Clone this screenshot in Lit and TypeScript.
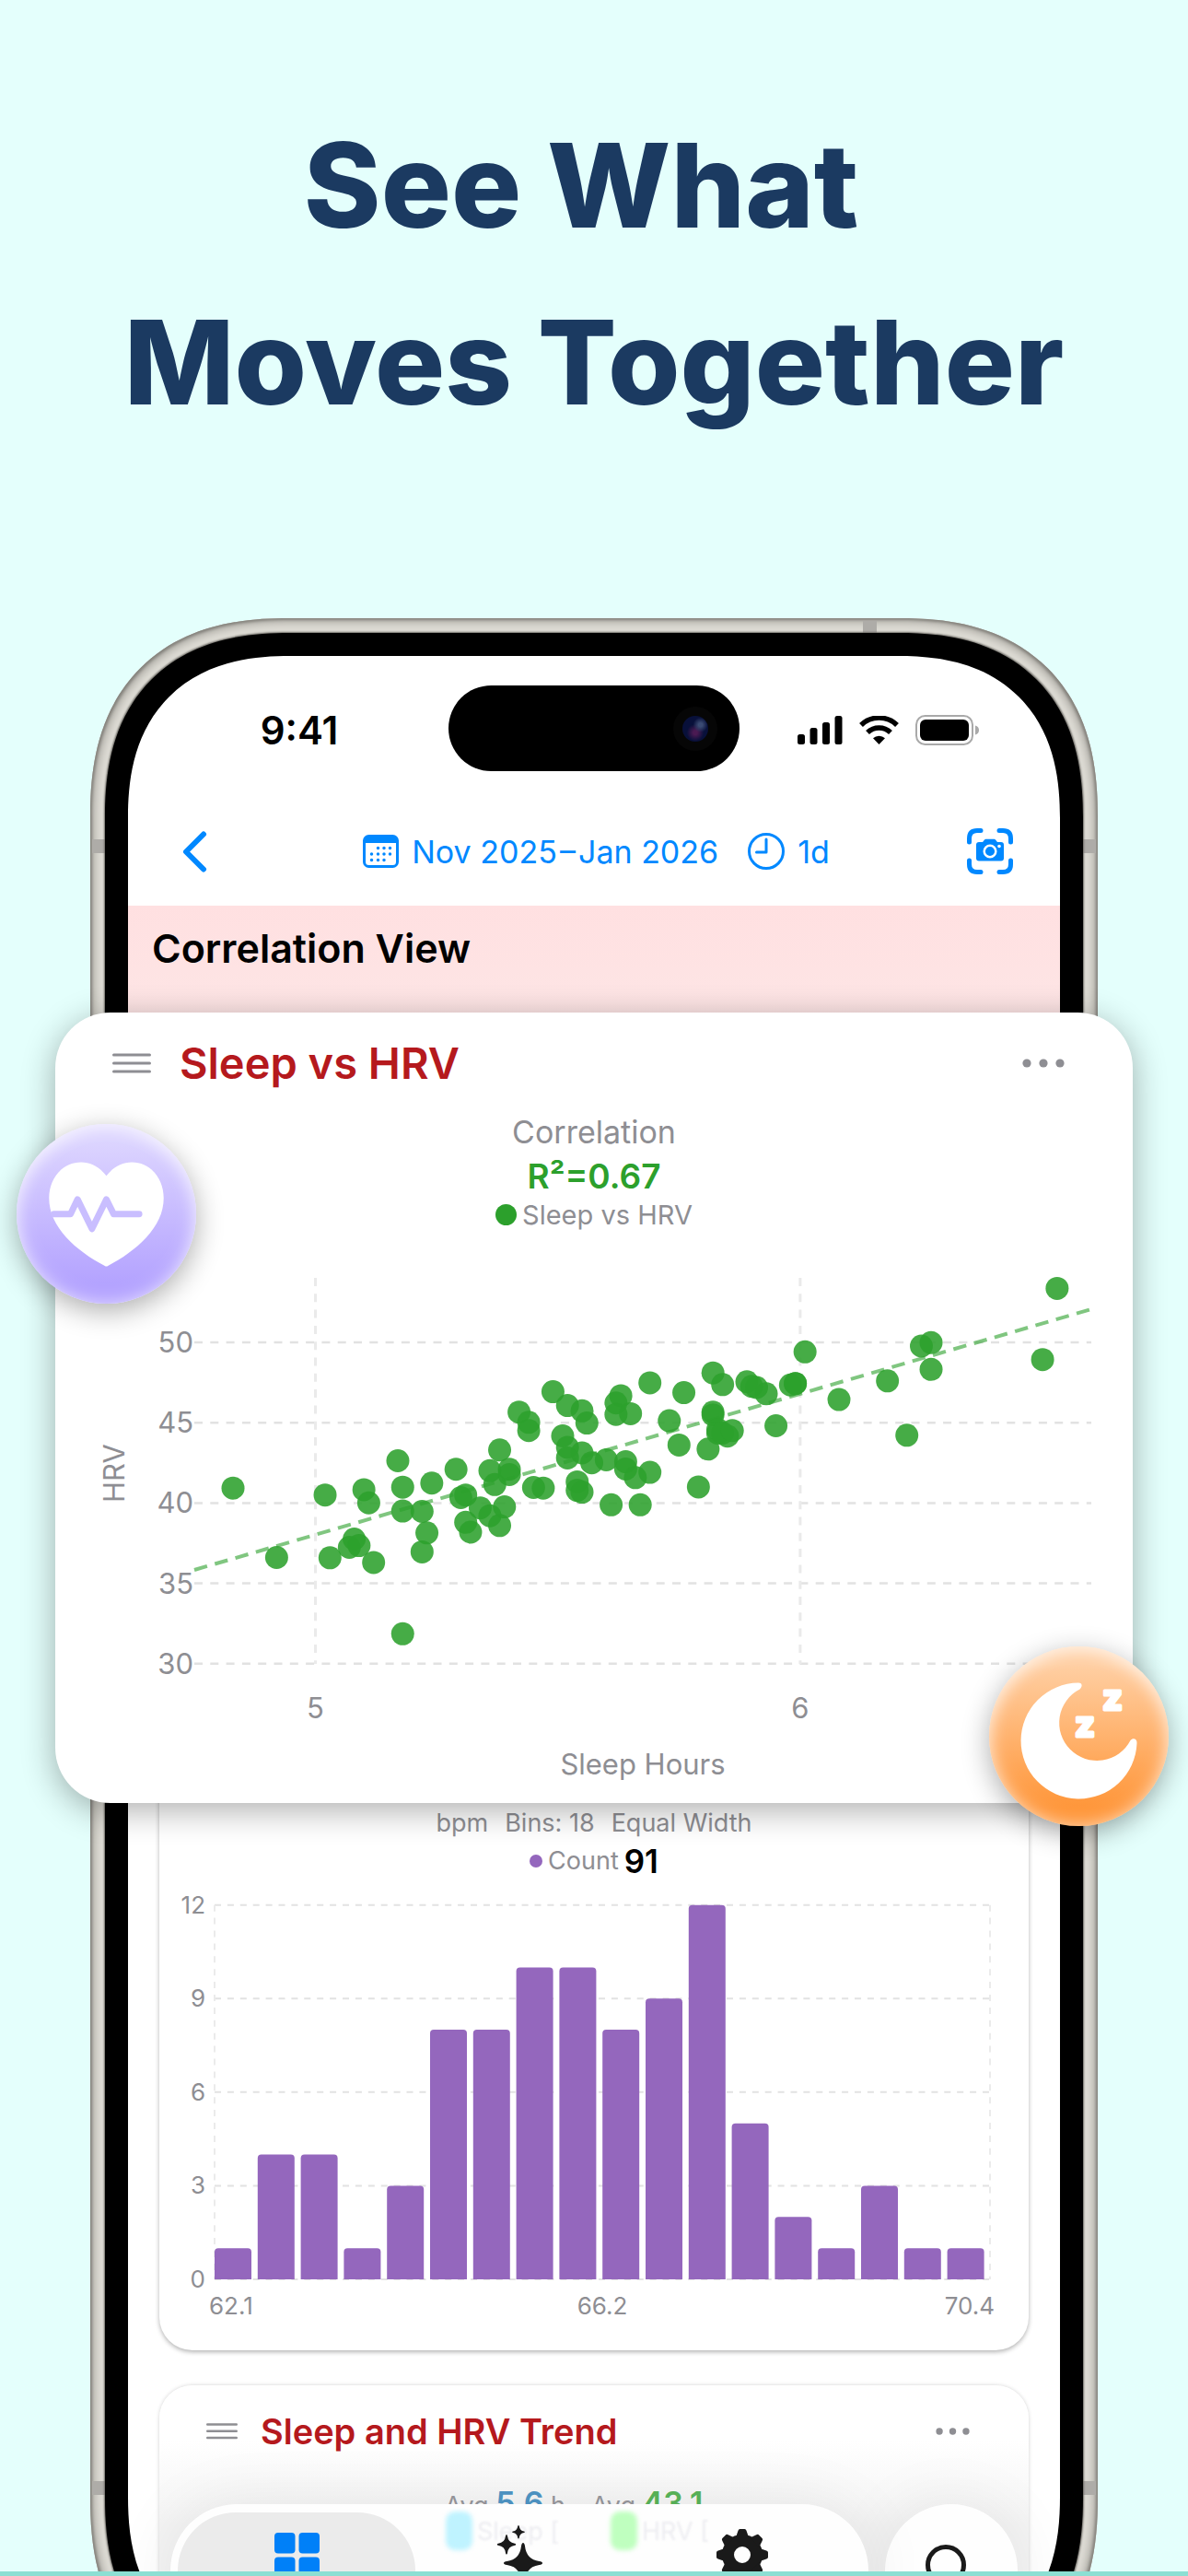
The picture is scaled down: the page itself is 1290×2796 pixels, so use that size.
import { LitElement, css, html, svg, type TemplateResult } from "lit";
import { customElement } from "lit/decorators.js";

// [sleep hours, HRV]
const points: [number, number][] = [
  [4.83, 40.93], [4.92, 36.61], [5.02, 40.5], [5.03, 36.59], [5.1, 40.83],
  [5.11, 40.01], [5.07, 37.24], [5.08, 37.76], [5.09, 37.35], [5.12, 36.3],
  [5.17, 42.63], [5.18, 40.99], [5.18, 39.5], [5.18, 31.86], [5.22, 39.48],
  [5.24, 41.24], [5.23, 38.14], [5.22, 36.96], [5.29, 42.1], [5.3, 40.34],
  [5.31, 40.5], [5.31, 38.8], [5.32, 38.19], [5.34, 39.7], [5.36, 42.01],
  [5.36, 39.21], [5.37, 41.15], [5.38, 43.3], [5.38, 38.6], [5.39, 39.76],
  [5.4, 42.1], [5.4, 41.77], [5.42, 45.66], [5.44, 45.02], [5.44, 44.51],
  [5.45, 40.97], [5.47, 40.93], [5.49, 46.93], [5.51, 44.18], [5.52, 46.07],
  [5.52, 43.47], [5.52, 42.81], [5.55, 45.74], [5.56, 44.98], [5.55, 43.12],
  [5.54, 41.32], [5.54, 40.79], [5.55, 40.68], [5.57, 42.51], [5.6, 42.69],
  [5.61, 39.89], [5.62, 46.23], [5.63, 46.68], [5.62, 45.52], [5.65, 45.56],
  [5.64, 42.57], [5.64, 42.12], [5.66, 41.58], [5.67, 39.89], [5.69, 47.48],
  [5.69, 41.91], [5.73, 45.12], [5.76, 46.87], [5.75, 43.61], [5.79, 41.0],
  [5.81, 43.36], [5.82, 48.1], [5.84, 47.37], [5.82, 45.65], [5.82, 45.49],
  [5.83, 44.56], [5.83, 44.35], [5.85, 44.17], [5.84, 44.35], [5.86, 44.51],
  [5.89, 47.55], [5.9, 47.26], [5.91, 47.19], [5.93, 46.8], [5.95, 44.81],
  [5.98, 47.35], [5.99, 47.44], [5.99, 47.44], [6.01, 49.41], [6.08, 46.44],
  [6.18, 47.6], [6.22, 44.22], [6.25, 49.77], [6.27, 49.98], [6.27, 48.32],
  [6.5, 48.93], [6.53, 53.36],
];

const bins = [1, 4, 4, 1, 3, 8, 8, 10, 10, 8, 9, 12, 5, 2, 1, 3, 1, 1];

const sx = (hours: number) => 282.5 + (hours - 5) * 526.4;
const sy = (hrv: number) => 80 + (50 - hrv) * 17.44;
const hx = (bin: number) => 60 + bin * 46.8;
const hy = (count: number) => 418 - count * 33.86;

@customElement("scatter-chart")
export class ScatterChart extends LitElement {
  render(): TemplateResult {
    return html`<svg viewBox="0 0 1170 580" role="img" aria-label="Sleep vs HRV">
      ${[50, 45, 40, 35, 30].map(
        (v) => svg`
          <line class="grid" x1="151" x2="1125" y1=${sy(v)} y2=${sy(v)} />
          <text x="150" y=${sy(v) + 11} text-anchor="end">${v}</text>`
      )}
      ${[5, 6].map(
        (v) => svg`
          <line class="grid light" x1=${sx(v)} x2=${sx(v)} y1="10" y2="429" />
          <text x=${sx(v)} y="488" text-anchor="middle">${v}</text>`
      )}
      <line class="trend" x1="151" y1="327" x2="1125" y2="44" />
      ${points.map(
        ([h, v]) => svg`<circle cx=${sx(h)} cy=${sy(v)} r="12.5" />`
      )}
      <text x="638" y="549" text-anchor="middle">Sleep Hours</text>
      <text transform="translate(75 222) rotate(-90)" text-anchor="middle">
        HRV
      </text>
    </svg>`;
  }

  static styles = css`
    :host {
      display: block;
    }

    svg {
      display: block;
      width: 100%;
      overflow: visible;
    }

    .grid {
      stroke: #e2e2e2;
      stroke-width: 2.5;
      stroke-dasharray: 9 8.3;
    }

    .grid.light {
      stroke: #eaeaea;
      stroke-width: 3;
    }

    .trend {
      stroke: #2ca02c;
      stroke-opacity: 0.6;
      stroke-width: 4;
      stroke-dasharray: 14.5 8.7;
    }

    circle {
      fill: #2ca02c;
      fill-opacity: 0.88;
    }

    text {
      font: 400 31px Inter, "Liberation Sans", sans-serif;
      fill: #8e8e93;
    }
  `;
}

@customElement("histogram-chart")
export class HistogramChart extends LitElement {
  render(): TemplateResult {
    return html`<svg viewBox="0 0 944 495" role="img" aria-label="Count per bin">
      ${[12, 9, 6, 3, 0].map(
        (v) => svg`
          <line x1="60" x2="902" y1=${hy(v)} y2=${hy(v)} />
          <text x="50" y=${hy(v) + 9} text-anchor="end">${v}</text>`
      )}
      <line class="light" x1="60" x2="60" y1=${hy(12)} y2="418" />
      <line class="light" x1="902" x2="902" y1=${hy(12)} y2="418" />
      ${bins.map((n, i) => {
        const top = hy(n);
        return svg`<path d=${`M${hx(i)} 418V${top + 4}q0-4 4-4h32q4 0 4 4V418z`} />`;
      })}
      <text x="54" y="456">62.1</text>
      <text x="481" y="456" text-anchor="middle">66.2</text>
      <text x="907" y="456" text-anchor="end">70.4</text>
    </svg>`;
  }

  static styles = css`
    :host {
      display: block;
    }

    svg {
      display: block;
      width: 100%;
      overflow: visible;
    }

    line {
      stroke: #e2e2e2;
      stroke-width: 2;
      stroke-dasharray: 7 6.9;
    }

    .light {
      stroke: #ebebeb;
    }

    path {
      fill: #9467bd;
    }

    text {
      font: 400 26px Inter, "Liberation Sans", sans-serif;
      fill: #8e8e93;
    }
  `;
}

@customElement("app-root")
export class AppRoot extends LitElement {
  cardHead(title: string): TemplateResult {
    return html`<header class="card-head">
      <button class="drag" aria-label="Reorder">
        <svg viewBox="0 0 42 24">
          <path d="M1.5 3h39M1.5 12h39M1.5 21h39" />
        </svg>
      </button>
      <h3>${title}</h3>
      <button class="more" aria-label="More">
        <svg viewBox="0 0 46 10">
          <circle cx="5" cy="5" r="4.6" />
          <circle cx="23" cy="5" r="4.6" />
          <circle cx="41" cy="5" r="4.6" />
        </svg>
      </button>
    </header>`;
  }

  statusBar(): TemplateResult {
    return html`<div class="status">
      <span class="time">9:41</span>
      <span class="island"><i class="lens"></i></span>
      <span class="signals">
        <svg width="49" height="31" viewBox="0 0 49 31">
          <rect x="0" y="20" width="8" height="11" rx="2.5" />
          <rect x="13.5" y="13" width="8" height="18" rx="2.5" />
          <rect x="27" y="7" width="8" height="24" rx="2.5" />
          <rect x="40.5" y="0" width="8" height="31" rx="2.5" />
        </svg>
        <svg width="43" height="31" viewBox="0 0 43 31">
          <path class="arc" d="M2 10A28 28 0 0 1 41 10" />
          <path class="arc" d="M9 18A18 18 0 0 1 34 18" />
          <path d="M21.5 31L15 24.3A9.5 9.5 0 0 1 28 24.3Z" />
        </svg>
        <svg width="70" height="33" viewBox="0 0 70 33">
          <rect class="shell" x="1" y="1" width="61" height="31" rx="9.5" />
          <rect x="5" y="5" width="53" height="23" rx="6" />
          <path class="cap" d="M65 11.5q4 1 4 5t-4 5z" />
        </svg>
      </span>
    </div>`;
  }

  toolbar(): TemplateResult {
    return html`<nav class="toolbar">
      <button aria-label="Back">
        <svg width="27" height="45" viewBox="0 0 27 45">
          <path class="stroke chevron" d="M23 3.5L4 22.5L23 41.5" />
        </svg>
      </button>
      <div class="range">
        <button>
          <svg width="39" height="38" viewBox="0 0 39 36">
            <rect class="stroke" x="1.5" y="1.5" width="36" height="33" rx="5" />
            <path d="M1 9V6q0-5 5-5h27q5 0 5 5v3z" />
            <path
              class="dots"
              d="M16.5 14.5h0M23 14.5h0M29.5 14.5h0M9.5 21h0M16.5 21h0M23 21h0M29.5 21h0M9.5 27.5h0M16.5 27.5h0M23 27.5h0"
            />
          </svg>
          Nov 2025&hairsp;–&hairsp;Jan 2026
        </button>
        <button>
          <svg width="40" height="40" viewBox="0 0 40 40">
            <circle class="stroke" cx="20" cy="20" r="18.5" />
            <path class="stroke" d="M20 7V21H9.5" />
          </svg>
          1d
        </button>
      </div>
      <button aria-label="Capture">
        <svg width="50" height="50" viewBox="0 0 50 50">
          <path
            class="stroke thick"
            d="M2.5 15V11q0-8.5 8.5-8.5h4M35 2.5h4q8.5 0 8.5 8.5v4M47.5 35v4q0 8.5-8.5 8.5h-4M15 47.5h-4q-8.5 0-8.5-8.5v-4"
          />
          <path
            d="M13 15h4l2-2.5q.6-.7 1.5-.7h9q.9 0 1.5.7l2 2.5h4q3 0 3 3v14.5q0 3-3 3H13q-3 0-3-3V18q0-3 3-3z"
          />
          <circle class="ring" cx="25" cy="25" r="6.3" />
          <circle class="flash" cx="35" cy="19.5" r="1.8" />
        </svg>
      </button>
    </nav>`;
  }

  tabBar(): TemplateResult {
    return html`<footer class="tabs">
      <nav class="pill">
        <div class="reflection" aria-hidden="true">
          <i class="blob cyan"></i><span>Sleep [</span>
          <i class="blob green"></i><span>HRV [</span>
        </div>
        <button class="tab active" aria-label="Dashboard">
          <svg width="49" height="50" viewBox="0 0 49 50">
            <rect width="22.5" height="22.5" rx="4" />
            <rect x="26.5" width="22.5" height="22.5" rx="4" />
            <rect y="26.5" width="22.5" height="22.5" rx="4" />
            <rect x="26.5" y="26.5" width="22.5" height="22.5" rx="4" />
          </svg>
        </button>
        <button class="tab" aria-label="Insights">
          <svg width="50" height="62" viewBox="0 0 50 62">
            <path
              d="M29 20q1.5 0 2 3.5q1.6 14.5 15.5 16.5q3.5.5 3.5 2t-3.5 2q-13.9 2-15.5 16.5q-.5 3.5-2 3.5t-2-3.5q-1.6-14.5-15.5-16.5q-3.5-.5-3.5-2t3.5-2q13.9-2 15.5-16.5q.5-3.5 2-3.5z"
            />
            <path
              d="M11 11q.8 0 1 1.5q.8 7.3 8 8.2q1.2.2 1.2 1t-1.2 1q-7.2 1-8 8.2q-.2 1.5-1 1.5t-1-1.5q-.8-7.2-8-8.2q-1.2-.2-1.2-1t1.2-1q7.2-.9 8-8.2q.2-1.5 1-1.5z"
            />
            <path
              d="M24 1q.6 0 .8 1q.6 4.8 5.2 5.5q.8.2.8.7t-.8.7q-4.6.7-5.2 5.5q-.2 1-.8 1t-.8-1q-.6-4.800-5.2-5.5q-.8-.2-.8-.7t.8-.7q4.6-.7 5.2-5.5q.2-1 .8-1z"
            />
          </svg>
        </button>
        <button class="tab" aria-label="Settings">
          <svg width="56" height="56" viewBox="0 0 56 56">
            <circle class="gear" cx="28" cy="28" r="15.5" />
            ${[0, 45, 90, 135, 180, 225, 270, 315].map(
              (a) => svg`<path
                transform=${`rotate(${a} 28 28)`}
                d="M21 9L23.5 1.8Q24 0 25.5 0h5Q32 0 32.5 1.8L35 9z"
              />`
            )}
          </svg>
        </button>
      </nav>
      <button class="search" aria-label="Search">
        <svg width="56" height="56" viewBox="0 0 56 56">
          <circle cx="22" cy="22" r="19.5" />
          <path d="M36 36l16 16" />
        </svg>
      </button>
    </footer>`;
  }

  render(): TemplateResult {
    return html`
      <h1>See What&nbsp;<br />Moves Together</h1>

      <main class="stage">
        <div class="phone">
          <i class="band top"></i>
          <i class="band upper"></i>
          <i class="band lower"></i>
          <div class="bezel">
            <div class="screen">
              ${this.statusBar()} ${this.toolbar()}
              <section class="banner"><h2>Correlation View</h2></section>
              <section class="cards">
                <article class="card distribution">
                  <p class="caption">
                    <span>bpm</span><span>Bins: 18</span><span>Equal Width</span>
                  </p>
                  <p class="count"><i></i>Count <b>91</b></p>
                  <histogram-chart></histogram-chart>
                </article>
                <article class="card trend">
                  ${this.cardHead("Sleep and HRV Trend")}
                  <p class="averages">
                    <span>Avg <b class="sleep">5.6</b> h</span>
                    <span>Avg <b class="hrv">43.1</b></span>
                  </p>
                </article>
              </section>
              ${this.tabBar()}
            </div>
          </div>
        </div>

        <article class="spotlight">
          ${this.cardHead("Sleep vs HRV")}
          <div class="summary">
            <p class="kind">Correlation</p>
            <p class="score">R²=0.67</p>
            <p class="legend"><i></i>Sleep vs HRV</p>
          </div>
          <scatter-chart></scatter-chart>

          <span class="badge heart">
            <svg viewBox="54 418 586 586">
              <path
                fill="#fff"
                d="M347 587C368 560 398 543 430 543C490 543 534 595 534 660C534 755 445 832 352 881Q347 884 342 881C249 832 160 755 160 660C160 595 204 543 265 543C297 543 326 560 347 587Z"
              />
              <path
                class="pulse"
                d="M176 712H230L253 664L300 760L347 664L371 712H454"
              />
            </svg>
          </span>
          <span class="badge moon">
            <svg viewBox="0 0 195 195">
              <path
                fill="#fff"
                d="M97 39.5A63 63 0 1 0 160.5 105C161 100 156 99 153.5 102A41 41 0 1 1 98.5 46.5C102 43 101 39.5 97 39.5Z"
              />
              <text x="93" y="98">z</text>
              <text x="123" y="69">z</text>
            </svg>
          </span>
        </article>
      </main>

      <div class="strip"></div>
    `;
  }

  static styles = css`
    :host {
      display: flex;
      flex-direction: column;
      height: 100vh;
      overflow: hidden;
      background: #e4fffc;
      color: #000;
      font-family: Inter, "Liberation Sans", sans-serif;
    }

    * {
      box-sizing: border-box;
    }

    h1,
    h2,
    h3,
    p {
      margin: 0;
    }

    button {
      display: flex;
      align-items: center;
      padding: 0;
      border: 0;
      background: none;
      color: inherit;
      font: inherit;
    }

    h1 {
      padding: 105px 40px 182px;
      color: #1b3a61;
      font-size: 127px;
      font-weight: 800;
      line-height: 192px;
      text-align: center;
    }

    .stage {
      position: relative;
      flex: 1 1 0;
      min-height: 0;
      overflow: hidden;
    }

    .strip {
      height: 5px;
      background: #8cdfd3;
    }

    /* phone */
    .phone {
      position: relative;
      display: flex;
      aspect-ratio: 1094 / 2256;
      margin: 0 98px;
      padding: 16px;
      border-radius: 188px;
      background: #dedcd5;
      box-shadow:
        inset 0 0 3px 2px #85837d,
        inset 0 0 8px 5px #aeaca6;
    }

    .band {
      position: absolute;
      background: #aeaca8;
    }

    .band.top {
      top: 3px;
      right: 240px;
      width: 15px;
      height: 13px;
    }

    .band.upper,
    .band.lower {
      left: 2px;
      right: 2px;
      height: 15px;
    }

    .band.upper {
      top: 240px;
    }

    .band.lower {
      top: 2022px;
    }

    .bezel {
      position: relative;
      display: flex;
      flex: 1;
      padding: 25px;
      border-radius: 174px;
      background: #000;
      box-shadow: 0 0 2px 1px #6b6964;
    }

    .screen {
      position: relative;
      flex: 1;
      min-width: 0;
      overflow: hidden;
      border-radius: 152px;
      background: #fff;
    }

    /* continuous corners where the browser can draw them */
    @supports (corner-shape: superellipse(1.25)) {
      .phone,
      .bezel,
      .screen {
        corner-shape: superellipse(1.25);
      }

      .phone {
        border-radius: 215px;
      }

      .bezel {
        border-radius: 200px;
      }

      .screen {
        border-radius: 176px;
      }
    }

    .status {
      display: grid;
      grid-template-columns: 1fr 316px 1fr;
      align-items: center;
      padding-top: 32px;
    }

    .time {
      padding: 4px 0 0 24px;
      font-size: 42px;
      font-weight: 600;
      line-height: 50px;
      text-align: center;
    }

    .island {
      display: flex;
      align-items: center;
      justify-content: flex-end;
      height: 93px;
      padding-right: 34px;
      border-radius: 47px;
      background: #000;
    }

    .lens {
      width: 28px;
      height: 28px;
      border-radius: 50%;
      background:
        radial-gradient(circle at 70% 35%, #3a4a72 0 8%, transparent 30%),
        radial-gradient(circle at 50% 65%, #4a1a52 0 10%, transparent 40%),
        #08103a;
      box-shadow: 0 0 0 10px #060606;
    }

    .signals {
      display: flex;
      align-items: center;
      gap: 18px;
      padding: 4px 0 0 63px;
    }

    .arc {
      fill: none;
      stroke: #000;
      stroke-width: 5.5;
    }

    .shell {
      fill: none;
      stroke: #a9a9a9;
      stroke-width: 2;
    }

    .cap {
      fill: #a9a9a9;
    }

    .toolbar {
      display: flex;
      align-items: center;
      justify-content: space-between;
      height: 146px;
      padding: 28px 51px 0 59px;
      color: #0088ff;
      font-size: 34px;
    }

    .toolbar svg {
      fill: #0088ff;
    }

    .range {
      display: flex;
      gap: 32px;
      padding-left: 20px;
    }

    .range button {
      gap: 14px;
    }

    .toolbar .stroke {
      fill: none;
      stroke: #0088ff;
      stroke-width: 3;
      stroke-linecap: round;
      stroke-linejoin: round;
    }

    .toolbar .thick {
      stroke-width: 5;
    }

    .toolbar .chevron {
      stroke-width: 6;
    }

    .dots {
      stroke: #0088ff;
      stroke-width: 3.5;
      stroke-linecap: round;
    }

    .ring {
      stroke: #fff;
      stroke-width: 2.5;
    }

    .flash {
      fill: #fff;
    }

    .banner {
      height: 640px;
      padding: 18px 26px;
      background: linear-gradient(#ffe0e1, #fde6e6 140px);
    }

    h2 {
      font-size: 43px;
      font-weight: 600;
      line-height: 56px;
    }

    .cards {
      display: grid;
      gap: 38px;
      padding: 60px 34px 0;
    }

    .card {
      border-radius: 36px;
      background: #fff;
      box-shadow: 0 2px 5px rgb(0 0 0 / 30%);
    }

    .distribution {
      padding-top: 280px;
      color: #8e8e93;
      font-size: 27px;
    }

    .caption {
      display: flex;
      justify-content: center;
      gap: 18px;
      line-height: 32px;
    }

    .count {
      display: flex;
      align-items: center;
      justify-content: center;
      gap: 6px;
      line-height: 50px;
    }

    .count i {
      width: 14px;
      height: 14px;
      border-radius: 50%;
      background: #9467bd;
    }

    .count b {
      color: #000;
      font-size: 35px;
      font-weight: 600;
    }

    .distribution histogram-chart {
      margin-top: 11px;
    }

    .card-head {
      display: flex;
      align-items: center;
      color: #b5191d;
    }

    .card-head h3 {
      flex: 1;
      font-weight: 600;
    }

    .card-head svg {
      display: block;
      width: 100%;
    }

    .drag path {
      stroke: #8e8e93;
      stroke-width: 3;
      stroke-linecap: round;
    }

    .more circle {
      fill: #8e8e93;
    }

    .trend {
      height: 330px;
      padding-top: 25px;
      background: linear-gradient(#fff 60px, #f4f4f4 150px);
      box-shadow: 0 0 4px rgb(0 0 0 / 18%);
    }

    .trend .card-head {
      gap: 25px;
      padding: 0 64px 0 51px;
      font-size: 32px;
      line-height: 50px;
    }

    .trend h3 {
      font-size: 38px;
    }

    .trend .drag {
      width: 34px;
    }

    .trend .more {
      width: 37px;
    }

    .averages {
      display: flex;
      justify-content: center;
      gap: 28px;
      margin-top: 28px;
      padding-right: 44px;
      color: #98989d;
      font-size: 27px;
      line-height: 50px;
    }

    .averages b {
      font-size: 34px;
      font-weight: 600;
    }

    .sleep {
      color: #4f96c6;
    }

    .hrv {
      color: #5ab55a;
    }

    /* floating tab bar */
    .tabs {
      position: absolute;
      right: 46px;
      bottom: 24px;
      left: 46px;
      display: flex;
      gap: 18px;
    }

    .pill {
      position: relative;
      display: flex;
      flex: 1;
      height: 144px;
      padding: 9px 16px;
      border-radius: 72px;
      background: #fefefe;
      box-shadow: 0 0 70px rgb(0 0 0 / 8%);
    }

    .tab {
      position: relative;
      flex: 1;
      align-items: flex-start;
      justify-content: center;
      padding-top: 18px;
    }

    .tab svg {
      position: relative;
      fill: #1a1a1a;
    }

    .tab:nth-of-type(2) {
      padding-top: 13px;
    }

    .tab.active {
      padding-top: 22px;
    }

    .tab.active svg {
      fill: #0080f8;
    }

    .tab.active::before {
      position: absolute;
      inset: 0 -8px;
      border-radius: 63px;
      background: #ebebeb;
      content: "";
    }

    .gear {
      fill: none;
      stroke: #1a1a1a;
      stroke-width: 13;
    }

    .reflection {
      position: absolute;
      top: 8px;
      left: 299px;
      display: flex;
      align-items: center;
      gap: 5px;
      color: #ededf1;
      font-size: 27px;
      filter: blur(1px);
    }

    .reflection span {
      width: 140px;
    }

    .blob {
      width: 29px;
      height: 42px;
      border-radius: 10px;
      filter: blur(2px);
    }

    .cyan {
      background: #bff3ff;
    }

    .green {
      background: #bfffbf;
    }

    .search {
      justify-content: center;
      width: 144px;
      height: 144px;
      border-radius: 50%;
      background: #fefefe;
      box-shadow: 0 0 70px rgb(0 0 0 / 8%);
    }

    .search svg {
      fill: none;
      stroke: #1a1a1a;
      stroke-width: 5;
      stroke-linecap: round;
    }

    /* enlarged card over the phone */
    .spotlight {
      position: absolute;
      top: 428px;
      right: 60px;
      left: 60px;
      padding-top: 25px;
      border-radius: 60px;
      background: #fff;
      box-shadow: 0 8px 36px rgb(0 0 0 / 32%);
    }

    .spotlight .card-head {
      gap: 31px;
      padding: 0 74px 0 62px;
      line-height: 60px;
    }

    .spotlight h3 {
      font-size: 47px;
    }

    .spotlight .drag {
      width: 42px;
    }

    .spotlight .more {
      width: 46px;
    }

    .summary {
      display: grid;
      justify-items: center;
      margin: 21px 0 41px;
      color: #8e8e93;
    }

    .kind {
      font-size: 34px;
      line-height: 48px;
    }

    .score {
      color: #2ca02c;
      font-size: 37px;
      font-weight: 600;
      line-height: 48px;
    }

    .legend {
      display: flex;
      align-items: center;
      gap: 6px;
      font-size: 29px;
      line-height: 35px;
    }

    .legend i {
      width: 23px;
      height: 23px;
      border-radius: 50%;
      background: #2ca02c;
    }

    .badge {
      position: absolute;
      width: 195px;
      height: 195px;
      border-radius: 50%;
    }

    .badge svg {
      display: block;
    }

    .heart {
      top: 121px;
      left: -42px;
      background: linear-gradient(#dcd4ff 10%, #b3a2ff 90%);
      box-shadow:
        0 8px 30px rgb(0 0 0 / 32%),
        inset 0 0 22px rgb(255 255 255 / 50%),
        inset 0 6px 16px rgb(255 255 255 / 50%);
    }

    .moon {
      right: -39px;
      bottom: -25px;
      background: linear-gradient(#ffcfa3 10%, #ff9639 90%);
      box-shadow:
        0 8px 30px rgb(0 0 0 / 32%),
        inset 0 0 22px rgb(255 255 255 / 50%),
        inset 0 6px 16px rgb(255 255 255 / 50%);
    }

    .pulse {
      fill: none;
      stroke: #c9beff;
      stroke-width: 21;
      stroke-linecap: round;
      stroke-linejoin: round;
    }

    .moon text {
      fill: #fff;
      stroke: #fff;
      stroke-width: 3;
      stroke-linejoin: round;
      font-size: 38px;
      font-weight: 800;
    }
  `;
}

declare global {
  interface HTMLElementTagNameMap {
    "scatter-chart": ScatterChart;
    "histogram-chart": HistogramChart;
    "app-root": AppRoot;
  }
}
